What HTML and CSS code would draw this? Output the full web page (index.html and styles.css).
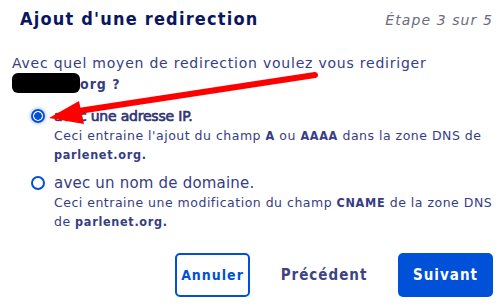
FILE: index.html
```html
<!DOCTYPE html>
<html lang="fr">

<head>
  <meta charset="UTF-8">
  <meta name="viewport" content="width=device-width, initial-scale=1.0">
  <title>Ajout d'une redirection</title>
  <link rel="stylesheet" href="styles.css">
</head>

<body>
  <div class="dialog">
    <div class="header">
      <h1>Ajout d'une redirection</h1>
      <span class="step">Étape 3 sur 5</span>
    </div>

    <p class="question">
      Avec quel moyen de redirection voulez vous rediriger
      <span class="masked"></span><b>org ?</b>
    </p>

    <div class="options">
      <label class="option">
        <input type="radio" name="mode" checked>
        <span class="option-body">
          <span class="option-title selected">avec une adresse IP.</span>
          <span class="option-desc">Ceci entraine l'ajout du champ <b>A</b> ou <b>AAAA</b> dans la zone DNS de <b>parlenet.org.</b></span>
        </span>
      </label>

      <label class="option">
        <input type="radio" name="mode">
        <span class="option-body">
          <span class="option-title">avec un nom de domaine.</span>
          <span class="option-desc">Ceci entraine une modification du champ <b>CNAME</b> de la zone DNS de <b>parlenet.org.</b></span>
        </span>
      </label>
    </div>

    <div class="actions">
      <button class="btn btn-outline">Annuler</button>
      <button class="btn btn-text">Précédent</button>
      <button class="btn btn-primary">Suivant</button>
    </div>

    <!-- flèche rouge de l'annotation -->
    <svg class="arrow" width="500" height="306" viewBox="0 0 500 306">
      <line x1="315" y1="75" x2="72" y2="112" stroke="#f00" stroke-width="6" stroke-linecap="round" />
      <polygon points="49,118 79,101 84,124" fill="#f00" />
    </svg>
  </div>
</body>

</html>
```

FILE: styles.css
```css
* {
  margin: 0;
  padding: 0;
  box-sizing: border-box;
}

body {
  font-family: 'DejaVu Sans', sans-serif;
  background: #fff;
  color: #363d84;
  width: 500px;
  height: 306px;
  overflow: hidden;
}

b,
h1 {
  font-family: 'DejaVu Sans Condensed', 'DejaVu Sans', sans-serif;
  font-weight: bold;
}

.dialog {
  position: relative;
  padding: 8px 7px 0 12px;
}

.header {
  display: flex;
  justify-content: space-between;
  align-items: baseline;
  padding-left: 8px;
}

h1 {
  font-size: 18px;
  color: #0b1660;
  letter-spacing: 1.2px;
}

.step {
  font-size: 14px;
  font-style: italic;
  color: #6a6d7c;
  letter-spacing: 1.1px;
}

.question {
  margin-top: 24px;
  font-size: 14px;
  line-height: 20px;
  letter-spacing: 0.78px;
}

.question b {
  letter-spacing: 1px;
}

.masked {
  display: inline-block;
  width: 68px;
  height: 20px;
  background: #000;
  border-radius: 6px;
  vertical-align: -4px;
}

.options {
  margin-top: 12px;
  margin-right: -7px;
  padding-left: 19px;
  display: flex;
  flex-direction: column;
  gap: 9px;
}

.option {
  display: flex;
  gap: 9px;
}

.option input {
  appearance: none;
  width: 14px;
  height: 14px;
  margin-top: 3px;
  border: 2px solid #0050d8;
  border-radius: 50%;
  flex-shrink: 0;
}

.option input:checked {
  background: radial-gradient(circle, #0050d8 0 3.5px, #fff 4px);
  box-shadow: 0 0 4px rgba(0, 80, 216, 0.5);
}

.option-body {
  display: flex;
  flex-direction: column;
}

.option-title {
  font-size: 15px;
  line-height: 20px;
  letter-spacing: 0.2px;
}

/* libellé de l'option cochée, un peu plus gras */
.option-title.selected {
  font-size: 14px;
  letter-spacing: -0.2px;
  color: #2f3578;
  -webkit-text-stroke: 0.65px #2f3578;
}

.option-desc {
  font-size: 12.5px;
  line-height: 19px;
  letter-spacing: 0.5px;
}

.option-desc b {
  letter-spacing: 0.7px;
}

.actions {
  margin-top: 22px;
  display: flex;
  justify-content: flex-end;
  align-items: center;
  gap: 29px;
}

.btn {
  font-family: 'DejaVu Sans Condensed', 'DejaVu Sans', sans-serif;
  font-size: 15px;
  font-weight: bold;
  letter-spacing: 1px;
  height: 44px;
  border-radius: 5px;
  cursor: pointer;
  background: none;
  border: none;
}

.btn-outline {
  width: 75px;
  border: 2px solid #0050d8;
  color: #0050d8;
  font-size: 14px;
}

.btn-text {
  color: #3e4383;
  width: 90px;
}

.btn-primary {
  width: 95px;
  background: #0050d8;
  color: #fff;
}

.arrow {
  position: absolute;
  left: 0;
  top: 0;
  pointer-events: none;
}
```
